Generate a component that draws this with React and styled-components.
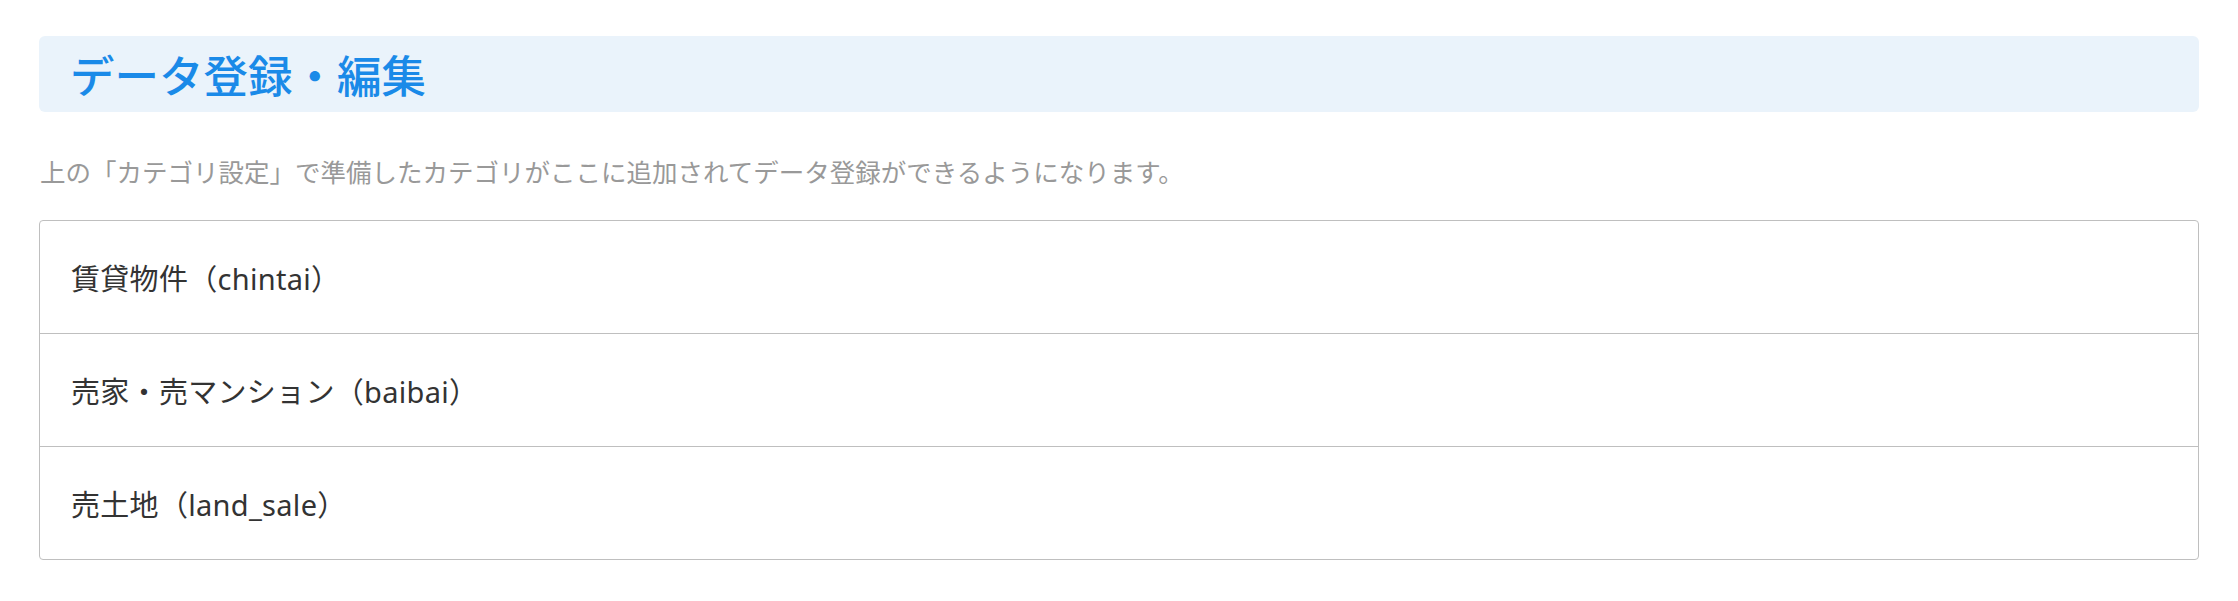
import React from 'react'
import styled, { createGlobalStyle } from 'styled-components'

const GlobalStyle = createGlobalStyle`
  body {
    margin: 0;
    background: #fff;
    font-family: "Noto Sans CJK JP", "Noto Sans", sans-serif;
  }
`

const Page = styled.div`
  padding: 36px 39px;
`

const TitleBar = styled.div`
  height: 76px;
  display: flex;
  align-items: center;
  padding-left: 31px;
  background: #eaf3fb;
  border-radius: 6px;
`

const Title = styled.h2`
  margin: 0;
  font-size: 44.5px;
  font-weight: 500;
  line-height: 1;
  color: #1a8ae8;
`

const Note = styled.p`
  margin: 40px 0 0 1px;
  font-size: 25.5px;
  line-height: 37px;
  color: #999;
`

const List = styled.div`
  margin-top: 31px;
  border: 1px solid #bfbfbf;
  border-radius: 4px;
  display: flex;
  flex-direction: column;
`

const Row = styled.div`
  height: 112px;
  display: flex;
  align-items: center;
  padding-left: 31px;
  font-family: "Noto Sans", "Noto Sans CJK JP", sans-serif;
  font-size: 29px;
  letter-spacing: 0.3px;
  color: #333;
  border-top: ${p => (p.first ? 'none' : '1px solid #bfbfbf')};
  cursor: pointer;
`

const categories = [
  { name: '賃貸物件', slug: 'chintai' },
  { name: '売家・売マンション', slug: 'baibai' },
  { name: '売土地', slug: 'land_sale' },
]

const App = () => {
  return (
    <Page>
      <GlobalStyle />
      <TitleBar>
        <Title>データ登録・編集</Title>
      </TitleBar>
      <Note>上の「カテゴリ設定」で準備したカテゴリがここに追加されてデータ登録ができるようになります。</Note>
      <List>
        {categories.map((c, i) => (
          <Row key={c.slug} first={i === 0}>
            {c.name}（{c.slug}）
          </Row>
        ))}
      </List>
    </Page>
  )
}

export default App
